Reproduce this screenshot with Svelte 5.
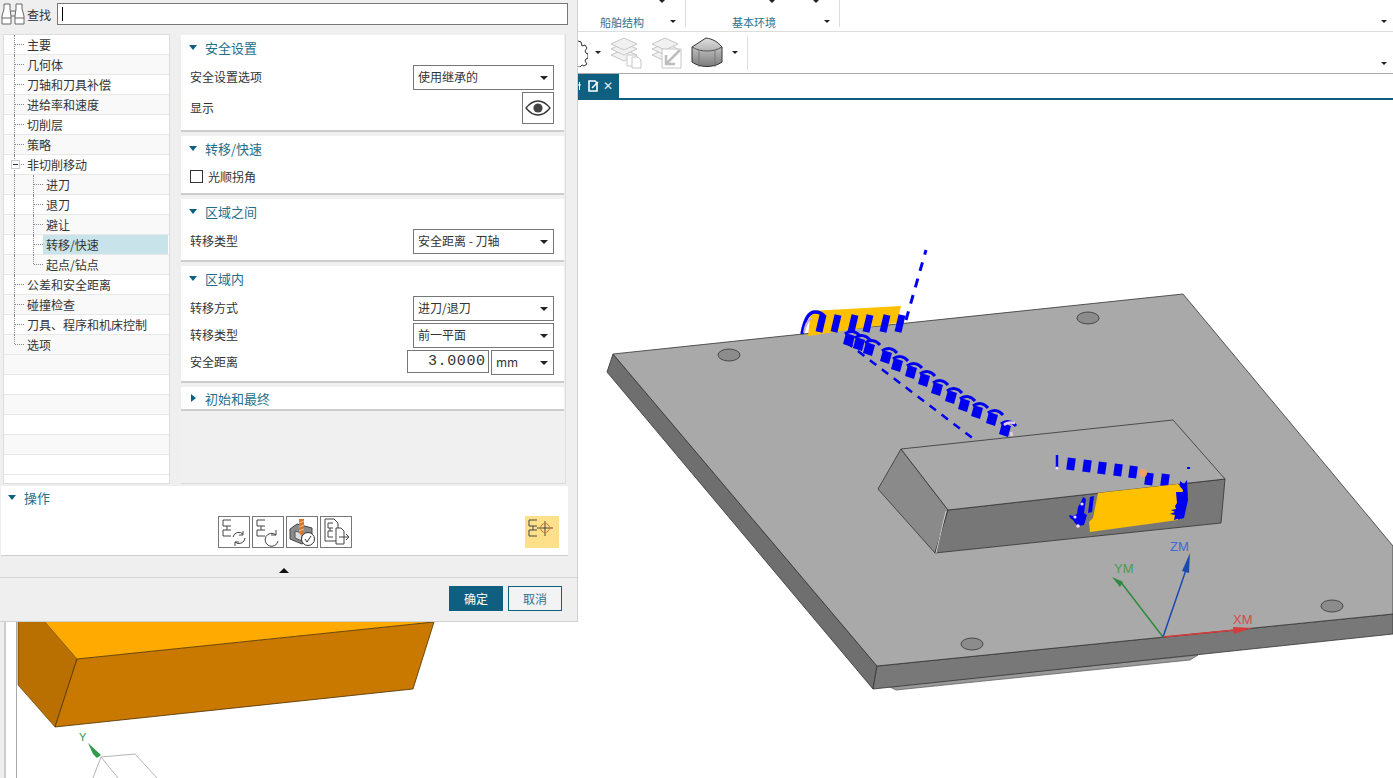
<script>
  const treeRows = [
    { label: "主要" },
    { label: "几何体" },
    { label: "刀轴和刀具补偿" },
    { label: "进给率和速度" },
    { label: "切削层" },
    { label: "策略" },
    { label: "非切削移动", open: true },
    { label: "进刀", child: true },
    { label: "退刀", child: true },
    { label: "避让", child: true },
    { label: "转移/快速", child: true, selected: true },
    { label: "起点/钻点", child: true, lastChild: true },
    { label: "公差和安全距离" },
    { label: "碰撞检查" },
    { label: "刀具、程序和机床控制" },
    { label: "选项", last: true }
  ];
  const emptyRows = [1, 2, 3, 4, 5, 6];

  // helix segments running down from the top edge of the plate, [x, y]
  const helix = [
    [850, 338], [860, 342], [870, 347], [887, 355], [898, 363], [912, 370], [925, 378],
    [938, 387], [952, 395], [965, 403], [978, 410], [993, 417], [1006, 428]
  ];
  const entryStripes = [823, 838, 855, 870, 887, 902];
  const floorBlocks = [
    [1071, 464], [1087, 466], [1102, 468], [1118, 470], [1133, 472], [1149, 479], [1165, 480]
  ];
  const holes = [[729, 355], [1088, 318], [1332, 606], [972, 644]];
</script>

{#snippet select(value)}
  <div class="select"><span>{value}</span><i class="caret"></i></div>
{/snippet}

{#snippet flowMark()}
  <path d="M12 3H4V9H12M8 9V13M12 13H4V19H12" fill="none" stroke="#444" />
{/snippet}

<div class="stage">
  <div class="chrome">
    <div class="ribbon">
      <div class="group first">
        <i class="caret dark top-a"></i>
        <span class="group-label">船舶结构</span>
        <i class="caret dark end"></i>
      </div>
      <div class="group second">
        <i class="caret dark top-b"></i>
        <i class="caret dark top-c"></i>
        <span class="group-label">基本环境</span>
        <i class="caret dark end"></i>
      </div>
      <i class="caret dark far"></i>
    </div>

    <div class="toolbar">
      <svg class="gear" width="10" height="28" viewBox="0 0 10 28">
        <path d="M0 2l3 1 1 4 3-1 2 3-2 3 1 2 2 1v4l-2 1-1 2 2 3-3 2-2-1-2 2-2 0" fill="#fff" stroke="#333" />
      </svg>
      <i class="caret dark"></i>
      <svg class="stack first-stack" width="34" height="32" viewBox="0 0 34 32">
        <g fill="#f1f1f1" stroke="#c6c6c6">
          <path d="M2 18l13-6 13 6-13 6z" />
          <path d="M2 12l13-6 13 6-13 6z" />
          <path d="M2 7l13-6 13 6-13 6z" />
          <path d="M18 18h9v11h-9z" fill="#fff" />
          <path d="M23 20h6l3 3v8H23z" fill="#fff" />
        </g>
      </svg>
      <svg class="stack" width="34" height="32" viewBox="0 0 34 32">
        <g fill="#f1f1f1" stroke="#c6c6c6">
          <path d="M2 18l13-6 13 6-13 6z" />
          <path d="M2 12l13-6 13 6-13 6z" />
          <path d="M2 7l13-6 13 6-13 6z" />
          <path d="M12 12h19v19H12z" fill="#fff" />
        </g>
        <path d="M30 13L17 26M16 18v9h9" fill="none" stroke="#bdbdbd" stroke-width="2.5" />
      </svg>
      <svg class="solid" width="32" height="32" viewBox="0 0 32 32">
        <defs>
          <linearGradient id="solidSide" x1="0" y1="0" x2="0" y2="1">
            <stop offset="0" stop-color="#e0e0e0" />
            <stop offset="1" stop-color="#7c7c7c" />
          </linearGradient>
        </defs>
        <path d="M1 10L15 1c7 1 12 4 16 9v15c-8 6-22 6-30 0z" fill="url(#solidSide)" stroke="#333" />
        <path d="M1 10c5 3 10 4 15 4s10-1 15-4" fill="none" stroke="#555" />
        <path d="M8 13v17M24 13v17" stroke="#777" fill="none" />
      </svg>
      <i class="caret dark"></i>
      <span class="tool-sep"></span>
      <i class="caret dark far"></i>
    </div>

    <div class="tabs">
      <div class="tab">
        <svg class="tab-sliver" width="4" height="12" viewBox="0 0 4 12">
          <path d="M0 5h3M1.500 2v8" stroke="#fff" fill="none" />
        </svg>
        <svg width="11" height="12" viewBox="0 0 11 12">
          <path d="M1 1h6l2 2v8H1z" fill="none" stroke="#fff" stroke-width="1.6" />
          <path d="M4 8l6-6" stroke="#fff" stroke-width="1.6" />
        </svg>
        <span class="tab-close">✕</span>
      </div>
    </div>
  </div>

  <svg class="viewport" width="1393" height="678" viewBox="0 100 1393 678">
    <rect x="0" y="100" width="4" height="678" fill="#eee" />
    <rect x="4" y="100" width="2" height="678" fill="#ccc" />
    <rect x="16" y="100" width="1" height="678" fill="#aaa" />

    <!-- orange blank behind the dialog -->
    <path d="M45 622V610H434V622L77 659z" fill="#ffaa00" />
    <path d="M18 610V685L55 727 77 659 45 622V610z" fill="#b97000" stroke="#5a3a00" stroke-width=".6" />
    <path d="M77 659L434 622 413 689 55 727z" fill="#c97800" stroke="#4a3000" stroke-width=".8" />

    <g stroke="#b5b5b5" fill="none">
      <path d="M101 757L135 754 157 778M101 757L93 778M101 757L118 778" />
    </g>
    <path d="M88 743l13 12-4 3-4-4z" fill="#2f9a48" />
    <text class="axis-small" x="79" y="741" fill="#2f9a48">Y</text>

    <!-- plate -->
    <path d="M888 686L1198 655 1190 660 896 690z" fill="#999" stroke="#555" stroke-width=".7" />
    <path d="M613 354L607 372 873 689 877 666z" fill="#6f6f6f" stroke="#333" stroke-width=".8" />
    <path d="M877 666L1393 614V634L873 689z" fill="#787878" stroke="#333" stroke-width=".8" />
    <path d="M613 354L1183 294 1393 546V614L877 666z" fill="#a9a9a9" stroke="#333" stroke-width=".8" />
    {#each holes as [cx, cy]}
      <ellipse {cx} {cy} rx="11" ry="6" fill="#8c8c8c" stroke="#333" stroke-width=".8" />
    {/each}

    <!-- raised pocket block -->
    <path d="M901 449L878 489 935 553 948 510z" fill="#8a8a8a" stroke="#333" stroke-width=".8" />
    <path d="M948 510L1225 479 1221 523 935 553z" fill="#777" stroke="#333" stroke-width=".8" />
    <path d="M901 449L1173 420 1225 479 948 510z" fill="#a9a9a9" stroke="#333" stroke-width=".8" />
    <path d="M946 511l-10 42" stroke="#ccc" stroke-width="1" />

    <!-- toolpath: entry side -->
    <path d="M811 311L901 306 897 323 808 336z" fill="#ffc000" />
    <path d="M802 334c2-12 6-22 13-22 5 0 8 2 10 5" fill="none" stroke="#0000f0" stroke-width="3.5" />
    <path d="M804 333c1-7 4-13 8-15" fill="none" stroke="#caa8d8" stroke-width="2" />
    {#each entryStripes as x}
      <path d="M{x} 315l-4 17" stroke="#0000f0" stroke-width="7" />
    {/each}
    <path d="M906 320L926 250" stroke="#0000f0" stroke-width="3" stroke-dasharray="9 8" />
    <path d="M846 342L975 440" stroke="#0000f0" stroke-width="2.5" stroke-dasharray="8 7" />

    {#each helix as [x, y]}
      <path d="M{x - 7} {y + 6}l3-11 9 3-3 11z" fill="#0000f0" />
      <path d="M{x - 5} {y - 4}c5-4 11-3 15 2" fill="none" stroke="#0000f0" stroke-width="3" />
    {/each}
    <path d="M1004 425c3-3 6-3 11-2M1011 432l1 4" fill="none" stroke="#e8d0ea" stroke-width="2.5" />

    <!-- toolpath: pocket side -->
    {#each floorBlocks as [x, y]}
      <rect x={x - 4} y={y - 6} width="8" height="12" fill="#0000f0" transform="rotate(8 {x} {y})" />
    {/each}
    <path d="M1057 455v13" stroke="#0000f0" stroke-width="2.5" />
    <circle cx="1057" cy="468" r="1.6" fill="#f0dcf0" />
    <circle cx="1143" cy="473" r="4" fill="#f0a060" />
    <rect x="1187" y="467" width="3" height="2" fill="#0000f0" />
    <path d="M1180 481l4 3 3-4 1 20-4 18-8 2 2-12-4-2 5-3z" fill="#0000f0" />
    <path d="M1098 493L1178 484 1183 490 1178 520 1090 532 1089 522 1093 518z" fill="#ffc000" />
    <path d="M1176 492h7l1 10-3 16-7 2 1-5-5-1 5-2-4-2 5-1-1-3 2-3z" fill="#0000f0" />
    <path d="M1083 497l3 2-2 14 3 2-3 10-6 1-3-3-2-3-3-2-1-3 4 1 4-2 1-7 3-5zM1094 496l-2 16-4 1 2-16z" fill="#0000f0" />
    <circle cx="1075" cy="517" r="1.6" fill="#f0dcf0" />
    <circle cx="1078" cy="526" r="1.8" fill="#f0dcf0" />
    <circle cx="1082" cy="504" r="1.6" fill="#f0dcf0" />

    <!-- WCS -->
    <path d="M1163 637L1120 581" stroke="#2f8a3f" stroke-width="1.5" />
    <path d="M1112 577l11 5-3 5z" fill="#2f8a3f" />
    <path d="M1163 637L1187 567" stroke="#1c49b0" stroke-width="1.5" />
    <path d="M1190 553l-1 20-7-2z" fill="#1c49b0" />
    <path d="M1163 637L1236 630" stroke="#d63a3a" stroke-width="1.5" />
    <path d="M1252 628l-18 6-1-7z" fill="#d63a3a" />
    <text class="axis" x="1114" y="573" fill="#4c9a55">YM</text>
    <text class="axis" x="1170" y="551" fill="#3f68d8">ZM</text>
    <text class="axis" x="1233" y="624" fill="#d84a4a">XM</text>
  </svg>

  <div class="dialog">
    <div class="search">
      <svg width="24" height="24" viewBox="0 0 24 24">
        <g fill="#fff" stroke="#666">
          <path d="M3 2h6v5l1 7v8H1v-8l2-7z" />
          <path d="M15 2h6v5l2 7v8h-9v-8l1-7z" />
          <path d="M1 16h9M14 16h9M10 9h4M10 14h4" fill="none" />
        </g>
      </svg>
      <span class="search-label">查找</span>
      <div class="search-box"><i class="cursor"></i></div>
    </div>

    <div class="body">
      <div class="tree">
        {#each treeRows as row, i}
          <div class="tree-row" class:alt={i % 2 === 1} class:child={row.child}>
            <i class="v-main" class:last={row.last}></i>
            {#if row.child}
              <i class="v-child" class:last={row.lastChild}></i>
            {/if}
            <i class="tick"></i>
            {#if row.open}
              <i class="minus"></i>
            {/if}
            <span class="tree-label" class:selected={row.selected}>{row.label}</span>
          </div>
        {/each}
        {#each emptyRows as n}
          <div class="tree-row" class:alt={n % 2 === 1}></div>
        {/each}
      </div>

      <div class="panel">
        <section>
          <h3><i class="tri"></i>安全设置</h3>
          <div class="rows">
            <div class="row">
              <span>安全设置选项</span>
              {@render select("使用继承的")}
            </div>
            <div class="row">
              <span>显示</span>
              <div class="eye">
                <svg width="26" height="16" viewBox="0 0 26 16">
                  <path d="M1 8c4-5 8-7 12-7s8 2 12 7c-4 5-8 7-12 7S5 13 1 8z" fill="none" stroke="#333" stroke-width="1.3" />
                  <circle cx="13" cy="8" r="4.6" fill="#444" />
                </svg>
              </div>
            </div>
          </div>
        </section>

        <section>
          <h3><i class="tri"></i>转移/快速</h3>
          <div class="rows">
            <label class="check"><i class="box"></i>光顺拐角</label>
          </div>
        </section>

        <section>
          <h3><i class="tri"></i>区域之间</h3>
          <div class="rows">
            <div class="row">
              <span>转移类型</span>
              {@render select("安全距离 - 刀轴")}
            </div>
          </div>
        </section>

        <section>
          <h3><i class="tri"></i>区域内</h3>
          <div class="rows">
            <div class="row">
              <span>转移方式</span>
              {@render select("进刀/退刀")}
            </div>
            <div class="row">
              <span>转移类型</span>
              {@render select("前一平面")}
            </div>
            <div class="row">
              <span>安全距离</span>
              <div class="measure">
                <div class="number">3.0000</div>
                <div class="select unit"><span>mm</span><i class="caret"></i></div>
              </div>
            </div>
          </div>
        </section>

        <section class="collapsed">
          <h3><i class="tri closed"></i>初始和最终</h3>
        </section>
      </div>
    </div>

    <div class="actions">
      <h3><i class="tri"></i>操作</h3>
      <div class="action-bar">
        <span></span>
        <div class="action-icons">
          <button>
            <svg width="30" height="30" viewBox="0 0 30 30">
              {@render flowMark()}
              <path d="M14 20a6 6 0 0 1 10-3M26 21a6 6 0 0 1-10 4" fill="none" stroke="#444" />
              <path d="M24 14v4h-4M16 29v-4h4" fill="none" stroke="#444" />
            </svg>
          </button>
          <button>
            <svg width="30" height="30" viewBox="0 0 30 30">
              {@render flowMark()}
              <path d="M23 18a6.500 6.500 0 1 0 2 6" fill="none" stroke="#444" />
              <path d="M23 13v5h-5" fill="none" stroke="#444" />
            </svg>
          </button>
          <button>
            <svg width="30" height="30" viewBox="0 0 30 30">
              <path d="M3 12l7-5 15 4v10l-10 6-12-5z" fill="#8b8b8b" stroke="#444" />
              <path d="M8 14l7 2v8l-7-3z" fill="#ddd" stroke="#555" />
              <path d="M12 2h5v14l-2 3-3-3z" fill="#d9762a" />
              <path d="M12 6l5-2M12 10l5-2M12 14l5-2" stroke="#f3c08e" />
              <circle cx="21" cy="22" r="6.500" fill="#fff" stroke="#333" />
              <path d="M18 22l2 3 4-6" fill="none" stroke="#333" />
            </svg>
          </button>
          <button>
            <svg width="30" height="30" viewBox="0 0 30 30">
              <path d="M4 2h9l4 4v18H4z" fill="#fff" stroke="#444" />
              <path d="M12 6H7V11H12M9 11V14M12 14H7V20H12" fill="none" stroke="#444" />
              <path d="M15 11h5l3 3v13h-8z" fill="#fff" stroke="#444" />
              <path d="M18 20h10M25 17l3 3-3 3" fill="none" stroke="#444" />
            </svg>
          </button>
        </div>
        <div class="action-end">
          <button class="active">
            <svg width="30" height="30" viewBox="0 0 30 30">
              {@render flowMark()}
              <path d="M12 11h16M20 4v15" stroke="#444" fill="none" />
              <circle cx="20" cy="11" r="4.500" fill="none" stroke="#d9762a" />
            </svg>
          </button>
        </div>
      </div>
    </div>

    <div class="fold"><i class="fold-arrow"></i></div>

    <div class="footer">
      <button class="primary">确定</button>
      <button class="ghost">取消</button>
    </div>
  </div>
</div>

<style>
  :global(body) {
    font-family: "Noto Sans CJK SC", "Noto Sans", sans-serif;
    font-size: 12px;
    color: #333;
    background: #fff;
  }

  .stage {
    position: relative;
    width: 1393px;
    height: 778px;
    overflow: hidden;
    background: #fff;
  }

  i {
    display: block;
    font-style: normal;
  }

  /* ribbon and toolbars */
  .chrome {
    padding-left: 578px;
    height: 100px;
  }
  .ribbon {
    display: flex;
    align-items: flex-start;
    height: 31px;
    border-bottom: 1px solid #ddd;
  }
  .group {
    position: relative;
    height: 27px;
    border-right: 1px solid #ddd;
  }
  .group.first {
    width: 107px;
  }
  .group.second {
    width: 153px;
  }
  .group-label {
    position: absolute;
    top: 14px;
    line-height: 16px;
    font-size: 11px;
    color: #2b7390;
  }
  .first .group-label {
    left: 22px;
  }
  .second .group-label {
    left: 46px;
  }
  .caret {
    width: 0;
    height: 0;
    border-left: 4px solid transparent;
    border-right: 4px solid transparent;
    border-top: 4px solid #222;
  }
  .caret.dark {
    border-left-width: 3px;
    border-right-width: 3px;
    border-top: 3px solid #222;
  }
  .group .caret {
    position: absolute;
  }
  .caret.end {
    top: 20px;
    right: 9px;
  }
  .first .top-a {
    top: 0;
    left: 81px;
  }
  .second .top-b {
    top: 0;
    left: 83px;
  }
  .second .top-c {
    top: 0;
    left: 127px;
  }
  .caret.far {
    margin-left: auto;
    margin-right: 6px;
    margin-top: 20px;
  }

  .toolbar {
    display: flex;
    align-items: center;
    height: 41px;
    border-bottom: 1px solid #aaa;
  }
  .toolbar .caret.far {
    align-self: flex-start;
    margin-top: 30px;
  }
  .gear {
    margin-right: 7px;
  }
  .first-stack {
    margin-left: 8px;
  }
  .stack {
    margin-right: 7px;
  }
  .solid {
    margin: 0 9px 0 0;
  }
  .tool-sep {
    width: 1px;
    height: 34px;
    margin-left: 9px;
    background: #ddd;
  }

  .tabs {
    height: 24px;
    border-bottom: 2px solid #0f6080;
  }
  .tab {
    display: flex;
    align-items: center;
    gap: 4px;
    width: 41px;
    height: 24px;
    box-sizing: border-box;
    background: #0f6080;
    color: #fff;
  }
  .tab-sliver {
    margin-right: 2px;
  }
  .tab-close {
    font-family: "DejaVu Sans", sans-serif;
    font-size: 12px;
    font-weight: bold;
    color: #e6e6e6;
  }

  .viewport {
    display: block;
  }
  .axis {
    font-family: "Liberation Sans", sans-serif;
    font-size: 13px;
  }
  .axis-small {
    font-family: "Liberation Sans", sans-serif;
    font-size: 11px;
  }

  /* dialog */
  .dialog {
    position: absolute;
    left: 0;
    top: 0;
    width: 578px;
    height: 622px;
    box-sizing: border-box;
    background: #efefef;
    border-right: 1px solid #d0d0d0;
    border-bottom: 1px solid #d0d0d0;
    overflow: hidden;
  }

  .search {
    display: flex;
    align-items: center;
    height: 28px;
    padding-left: 1px;
  }
  .search-label {
    margin-left: 2px;
    width: 30px;
  }
  .search-box {
    flex: none;
    width: 509px;
    height: 20px;
    border: 1px solid #777;
    background: #fff;
  }
  .cursor {
    width: 1px;
    height: 14px;
    margin: 3px 0 0 4px;
    background: #000;
  }

  .body {
    display: flex;
    gap: 11px;
    height: 450px;
    margin-top: 6px;
    padding-left: 3px;
  }

  .tree {
    width: 167px;
    height: 450px;
    overflow: hidden;
    box-sizing: border-box;
    background: #fff;
    border: 1px solid #ddd;
  }
  .tree-row {
    position: relative;
    display: flex;
    align-items: center;
    height: 20px;
    box-sizing: border-box;
    padding-left: 22px;
    border-bottom: 1px solid #e8e8e8;
    background: #fff;
  }
  .tree-row.alt {
    background: #f9f9f9;
  }
  .tree-row.child {
    padding-left: 41px;
  }
  .tree-label {
    display: block;
    line-height: 19px;
    padding: 0 0 0 1px;
    white-space: nowrap;
    color: #333;
  }
  .tree-label.selected {
    flex: 1;
    margin-left: -2px;
    margin-right: 1px;
    padding-left: 3px;
    background: #c9e3ea;
  }
  .v-main,
  .v-child,
  .tick,
  .minus {
    position: absolute;
  }
  .v-main {
    left: 10px;
    top: 0;
    bottom: -1px;
    border-left: 1px dotted #888;
  }
  .v-main.last {
    bottom: 10px;
  }
  .v-child {
    left: 29px;
    top: 0;
    bottom: -1px;
    border-left: 1px dotted #888;
  }
  .v-child.last {
    bottom: 10px;
  }
  .tick {
    left: 11px;
    top: 9px;
    width: 9px;
    border-top: 1px dotted #888;
  }
  .child .tick {
    left: 30px;
    width: 9px;
  }
  .minus {
    left: 7px;
    top: 5px;
    width: 7px;
    height: 7px;
    border: 1px solid #ccc;
    background: linear-gradient(#333, #333) center / 5px 1px no-repeat #fff;
  }

  .panel {
    width: 385px;
    height: 450px;
    box-sizing: border-box;
    padding-top: 1px;
    background: #f0f0f0;
    border: 1px solid #ddd;
    border-top: none;
    border-left: none;
    overflow: hidden;
  }
  section {
    margin-bottom: 4px;
    width: 383px;
    background: #fff;
    border-bottom: 2px solid #ccc;
  }
  h3 {
    display: flex;
    align-items: center;
    height: 26px;
    box-sizing: border-box;
    margin: 0;
    padding-bottom: 2px;
    font-size: 13px;
    font-weight: 400;
    color: #1f6f8b;
  }
  section h3 {
    padding-left: 8px;
  }
  .tri {
    width: 0;
    height: 0;
    margin-right: 8px;
    border-left: 4px solid transparent;
    border-right: 4px solid transparent;
    border-top: 5px solid #0f6080;
  }
  .tri.closed {
    margin: 0 9px 0 2px;
    border-top: 4px solid transparent;
    border-bottom: 4px solid transparent;
    border-left: 5px solid #0f6080;
    border-right: none;
  }
  .collapsed h3 {
    height: 22px;
    padding-bottom: 0;
  }
  .rows {
    display: flex;
    flex-direction: column;
    gap: 2px;
    padding: 4px 10px 6px 9px;
  }
  .row {
    display: flex;
    align-items: center;
    justify-content: space-between;
  }
  .row > span,
  .select > span {
    padding-bottom: 2px;
  }
  .select {
    display: flex;
    align-items: center;
    justify-content: space-between;
    width: 141px;
    height: 25px;
    box-sizing: border-box;
    padding: 0 5px 0 4px;
    border: 1px solid #777;
    background: #fff;
  }
  .select.unit {
    width: 63px;
  }
  .eye {
    display: flex;
    align-items: center;
    justify-content: center;
    width: 32px;
    height: 32px;
    box-sizing: border-box;
    border: 1px solid #777;
  }
  .check {
    display: flex;
    align-items: center;
    gap: 5px;
    height: 21px;
    padding-bottom: 1px;
    box-sizing: border-box;
  }
  .box {
    width: 11px;
    height: 11px;
    border: 1px solid #333;
  }
  .measure {
    display: flex;
    align-items: flex-start;
    gap: 2px;
  }
  .number {
    width: 82px;
    height: 23px;
    box-sizing: border-box;
    padding-left: 20px;
    border: 1px solid #777;
    font-family: "Liberation Mono", monospace;
    font-size: 15px;
    line-height: 21px;
    white-space: nowrap;
    letter-spacing: .6px;
  }

  .actions {
    width: 567px;
    height: 70px;
    margin: 2px 0 0 1px;
    box-sizing: border-box;
    background: #fff;
    border-bottom: 1px solid #ccc;
  }
  .actions h3 {
    height: 24px;
    padding-left: 7px;
    margin-bottom: 6px;
  }
  .action-bar {
    display: grid;
    grid-template-columns: 1fr auto 1fr;
    padding: 0 9px;
  }
  .action-icons {
    display: flex;
    gap: 2px;
  }
  .action-end {
    display: flex;
    justify-content: flex-end;
  }
  button {
    display: block;
    padding: 0;
    font: inherit;
    background: none;
  }
  .action-icons button {
    width: 32px;
    height: 32px;
    border: 1px solid #777;
  }
  button.active {
    width: 34px;
    height: 32px;
    border: none;
    background: #ffe08a;
  }
  button svg {
    display: block;
  }

  .fold {
    display: flex;
    justify-content: center;
    align-items: center;
    height: 21px;
    width: 568px;
    padding-top: 7px;
    box-sizing: border-box;
  }
  .fold-arrow {
    width: 0;
    height: 0;
    border-left: 5px solid transparent;
    border-right: 5px solid transparent;
    border-bottom: 5px solid #111;
  }
  .footer {
    display: flex;
    justify-content: flex-end;
    gap: 5px;
    padding: 8px 15px 0 0;
    border-top: 1px solid #d6d6d6;
  }
  .primary,
  .ghost {
    width: 54px;
    height: 25px;
    border: 1px solid #0f6080;
    font-size: 12px;
  }
  .primary {
    background: #0f6080;
    color: #fff;
  }
  .ghost {
    color: #2b7390;
    background: #f3f3f3;
  }
</style>
